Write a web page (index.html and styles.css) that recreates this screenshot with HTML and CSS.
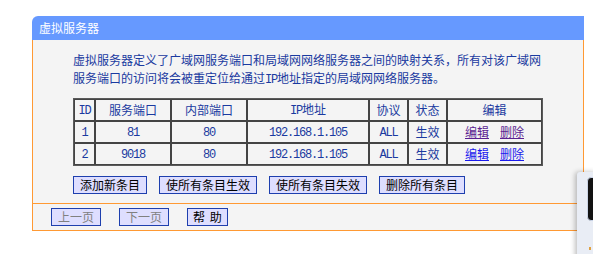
FILE: index.html
```html
<!DOCTYPE html>
<html lang="zh-CN">
<head>
<meta charset="utf-8">
<title>虚拟服务器</title>
<link rel="stylesheet" href="styles.css">
</head>
<body>
<div class="frame">
  <div class="title">虚拟服务器</div>
  <div class="panel">
    <p class="desc">虚拟服务器定义了广域网服务端口和局域网网络服务器之间的映射关系，所有对该广域网<br>服务端口的访问将会被重定位给通过<span class="en">IP</span>地址指定的局域网网络服务器。</p>
    <table class="grid">
      <thead>
        <tr>
          <th class="c-id"><span class="en">ID</span></th>
          <th class="c-port">服务端口</th>
          <th class="c-port">内部端口</th>
          <th class="c-ip"><span class="en">IP</span>地址</th>
          <th class="c-small">协议</th>
          <th class="c-small">状态</th>
          <th class="c-edit">编辑</th>
        </tr>
      </thead>
      <tbody>
        <tr>
          <td><span class="en">1</span></td>
          <td><span class="en">81</span></td>
          <td><span class="en">80</span></td>
          <td><span class="en">192.168.1.105</span></td>
          <td><span class="en">ALL</span></td>
          <td><a class="state" href="#">生效</a></td>
          <td><a class="lnk visited" href="#">编辑</a><a class="lnk visited" href="#">删除</a></td>
        </tr>
        <tr>
          <td><span class="en">2</span></td>
          <td><span class="en">9018</span></td>
          <td><span class="en">80</span></td>
          <td><span class="en">192.168.1.105</span></td>
          <td><span class="en">ALL</span></td>
          <td><a class="state" href="#">生效</a></td>
          <td><a class="lnk" href="#">编辑</a><a class="lnk" href="#">删除</a></td>
        </tr>
      </tbody>
    </table>
    <div class="actions">
      <button class="btn">添加新条目</button>
      <button class="btn">使所有条目生效</button>
      <button class="btn">使所有条目失效</button>
      <button class="btn">删除所有条目</button>
    </div>
  </div>
  <div class="footer">
    <button class="btn" disabled>上一页</button>
    <button class="btn" disabled>下一页</button>
    <button class="btn help">帮 助</button>
  </div>
</div>
<div class="popup">
  <div class="popup-screen"></div>
  <div class="popup-dot"></div>
</div>
</body>
</html>
```
FILE: styles.css
```css
* { box-sizing: border-box; }

html, body {
  margin: 0;
  padding: 0;
  background: #ffffff;
  font-family: "Noto Sans CJK SC", "Liberation Sans", sans-serif;
  font-size: 12px;
  color: #1a3aa0;
}

.frame {
  margin: 16px 0 0 32px;
  width: 552px;
}

.title {
  height: 24px;
  line-height: 24px;
  padding-left: 7px;
  background: #6699ff;
  color: #ffffff;
  border-top-left-radius: 6px;
  font-size: 12px;
}

.panel {
  background: #f4f4f4;
  border-left: 1px solid #ff9933;
  border-right: 1px solid #ff9933;
  padding: 11px 0 9px 40px;
}

.desc {
  margin: 0 0 9px 0;
  line-height: 18px;
  color: #1a3aa0;
}

.en {
  font-family: "Liberation Mono", monospace;
  font-size: 12px;
  letter-spacing: -1.2px;
}

.grid {
  border-collapse: separate;
  border-spacing: 0;
  table-layout: fixed;
  width: 470px;
  border: 1px solid #5a5a5a;
}

.grid th,
.grid td {
  border: 1px solid #444444;
  padding: 0;
  height: 20px;
  line-height: 18px;
  text-align: center;
  vertical-align: middle;
  font-weight: normal;
  color: #1a3aa0;
  white-space: nowrap;
}

.c-id { width: 21px; }
.c-port { width: 76px; }
.c-ip { width: 122px; }
.c-small { width: 39px; }
.c-edit { width: 95px; }

.state {
  color: #1a3aa0;
  text-decoration: none;
}

.lnk {
  color: #1a1aee;
  text-decoration: underline;
}

.lnk + .lnk { margin-left: 11px; }

.lnk.visited { color: #5b1f91; }

.actions {
  display: flex;
  gap: 12px;
  margin-top: 10px;
}

.btn {
  font-family: "Noto Sans CJK SC", sans-serif;
  font-size: 12px;
  line-height: 16px;
  height: 18px;
  padding: 0 6px;
  margin: 0;
  border: 1px solid #1e3fae;
  border-radius: 0;
  background: #dedeff;
  color: #000000;
}

.btn:disabled { color: #808080; }

.footer {
  display: flex;
  gap: 18px;
  background: #f4f4f4;
  border: 1px solid #ff9933;
  padding: 4px 0 4px 18px;
}

.help {
  padding: 0 5px;
  word-spacing: 2px;
}

.popup {
  position: absolute;
  left: 577px;
  top: 172px;
  width: 20px;
  height: 90px;
  background: #e9edf5;
  box-shadow: -2px 0 5px rgba(0, 0, 0, 0.25);
  border-top-left-radius: 3px;
}

.popup-screen {
  position: absolute;
  left: 10px;
  top: 5px;
  width: 14px;
  height: 44px;
  background: #121212;
  border: 1px solid #c9d3e6;
  border-radius: 4px;
}

.popup-dot {
  position: absolute;
  left: 12px;
  top: 75px;
  width: 2px;
  height: 3px;
  background: #e0a040;
}
```
